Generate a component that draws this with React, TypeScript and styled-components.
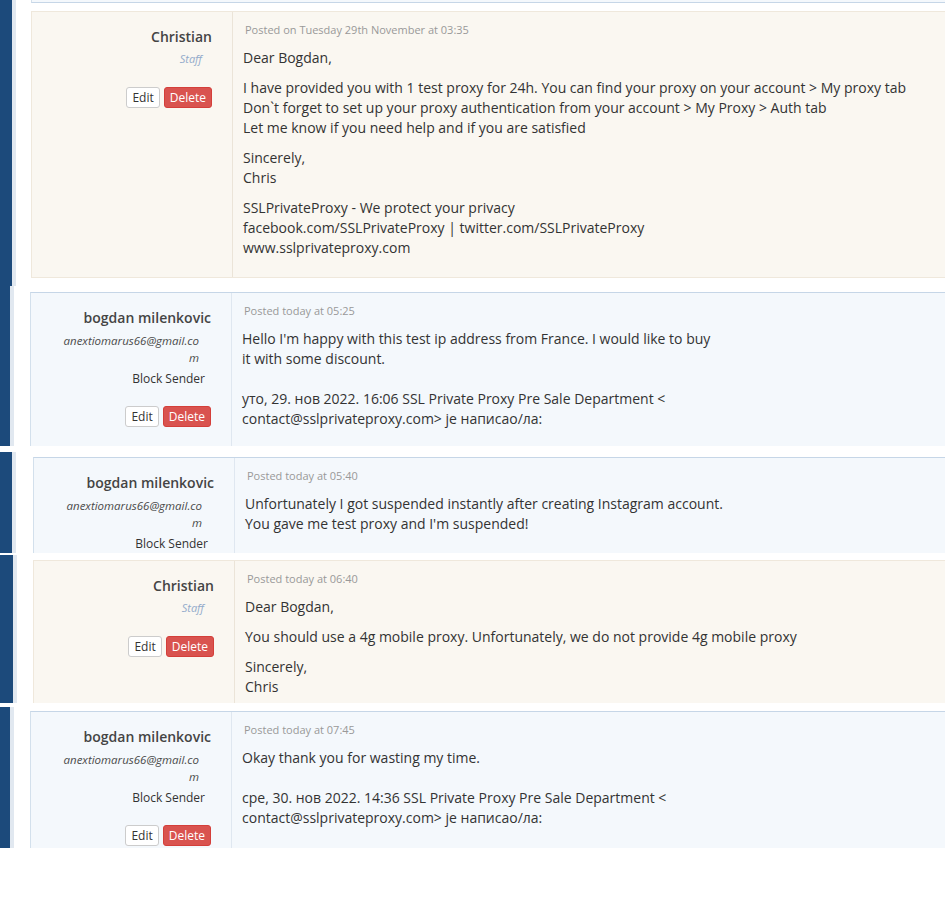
import React from "react";
import styled, { createGlobalStyle, css } from "styled-components";

type Kind = "staff" | "client";

interface Reply {
  kind: Kind;
  name: string;
  email?: string;
  posted: string;
  paragraphs: string[][];
}

interface Slice {
  height: number;
  gap: number;
  bar: number;
  cardLeft: number;
  cardTop: number;
  reply: Reply;
  prevEdge?: boolean;
  noActions?: boolean;
}

const EMAIL = "anextiomarus66@gmail.com";
const QUOTE_TAIL = "contact@sslprivateproxy.com> је написао/ла:";

const slices: Slice[] = [
  {
    height: 286,
    gap: 0,
    bar: 12,
    cardLeft: 31,
    cardTop: 8,
    prevEdge: true,
    reply: {
      kind: "staff",
      name: "Christian",
      posted: "Posted on Tuesday 29th November at 03:35",
      paragraphs: [
        ["Dear Bogdan,"],
        [
          "I have provided you with 1 test proxy for 24h. You can find your proxy on your account > My proxy tab",
          "Don`t forget to set up your proxy authentication from your account > My Proxy > Auth tab",
          "Let me know if you need help and if you are satisfied",
        ],
        ["Sincerely,", "Chris"],
        [
          "SSLPrivateProxy - We protect your privacy",
          "facebook.com/SSLPrivateProxy | twitter.com/SSLPrivateProxy",
          "www.sslprivateproxy.com",
        ],
      ],
    },
  },
  {
    height: 160,
    gap: 0,
    bar: 10,
    cardLeft: 30,
    cardTop: 6,
    reply: {
      kind: "client",
      name: "bogdan milenkovic",
      email: EMAIL,
      posted: "Posted today at 05:25",
      paragraphs: [
        [
          "Hello I'm happy with this test ip address from France. I would like to buy",
          "it with some discount.",
          "",
          "уто, 29. нов 2022. 16:06 SSL Private Proxy Pre Sale Department <",
          QUOTE_TAIL,
        ],
      ],
    },
  },
  {
    height: 101,
    gap: 6,
    bar: 12,
    cardLeft: 33,
    cardTop: 5,
    noActions: true,
    reply: {
      kind: "client",
      name: "bogdan milenkovic",
      email: EMAIL,
      posted: "Posted today at 05:40",
      paragraphs: [
        [
          "Unfortunately I got suspended instantly after creating Instagram account.",
          "You gave me test proxy and I'm suspended!",
        ],
      ],
    },
  },
  {
    height: 148,
    gap: 2,
    bar: 13,
    cardLeft: 33,
    cardTop: 5,
    reply: {
      kind: "staff",
      name: "Christian",
      posted: "Posted today at 06:40",
      paragraphs: [
        ["Dear Bogdan,"],
        ["You should use a 4g mobile proxy. Unfortunately, we do not provide 4g mobile proxy"],
        ["Sincerely,", "Chris"],
      ],
    },
  },
  {
    height: 141,
    gap: 4,
    bar: 10,
    cardLeft: 30,
    cardTop: 4,
    reply: {
      kind: "client",
      name: "bogdan milenkovic",
      email: EMAIL,
      posted: "Posted today at 07:45",
      paragraphs: [
        [
          "Okay thank you for wasting my time.",
          "",
          "сре, 30. нов 2022. 14:36 SSL Private Proxy Pre Sale Department <",
          QUOTE_TAIL,
        ],
      ],
    },
  },
];

const palette = {
  staff: { bg: "#faf7f1", border: "#efe8dc", divider: "#ebe4d8" },
  client: { bg: "#f4f8fc", border: "#d3e0ec", divider: "#dfe7f0" },
};

const GlobalStyle = createGlobalStyle`
  html, body {
    margin: 0;
    padding: 0;
    background: #ffffff;
    overflow: hidden;
  }
  body {
    font-family: "Open Sans", "Noto Sans", sans-serif;
    color: #333333;
  }
`;

const Page = styled.div`
  display: flex;
  flex-direction: column;
  width: 945px;
`;

const Strip = styled.div<{ $height: number; $gap: number }>`
  display: flex;
  height: ${({ $height }) => $height}px;
  margin-top: ${({ $gap }) => $gap}px;
  overflow: hidden;
`;

const SideBar = styled.div<{ $width: number }>`
  flex-shrink: 0;
  width: ${({ $width }) => $width}px;
  background: #1c4a7b;
  border-right: 4px solid #e1e8f0;
`;

const Lane = styled.div<{ $left: number }>`
  flex: 1;
  min-width: 0;
  display: flex;
  flex-direction: column;
  padding-left: ${({ $left }) => $left}px;
`;

const PrevEdge = styled.div`
  height: 2px;
  background: ${palette.client.bg};
  border-left: 1px solid ${palette.client.border};
  border-bottom: 1px solid #c6d6e7;
  margin-bottom: 8px;
`;

const Card = styled.div<{ $kind: Kind; $top: number }>`
  display: flex;
  flex-shrink: 0;
  margin-top: ${({ $top }) => $top}px;
  background: ${({ $kind }) => palette[$kind].bg};
  border: 1px solid ${({ $kind }) => palette[$kind].border};
  border-right: 0;
  ${({ $kind }) =>
    $kind === "client" &&
    css`
      border-top-color: #c6d6e7;
    `}
`;

const Author = styled.div<{ $kind: Kind }>`
  flex-shrink: 0;
  width: 180px;
  padding: 15px 20px 19px 0;
  border-right: 1px solid ${({ $kind }) => palette[$kind].divider};
  display: flex;
  flex-direction: column;
  align-items: flex-end;
  text-align: right;
`;

const Name = styled.div`
  font-size: 14px;
  line-height: 20px;
  font-weight: 600;
  color: #444444;
  margin-bottom: 4px;
`;

const Role = styled.div`
  font-size: 11px;
  line-height: 16px;
  font-style: italic;
  color: #93abcb;
  margin-right: 10px;
  margin-bottom: 3px;
`;

/* the address is wrapped inside a narrow box, as the author column does */
const Email = styled.div`
  width: 142px;
  font-size: 11.5px;
  line-height: 17px;
  font-style: italic;
  color: #4a4a4a;
  word-break: break-all;
  margin-right: 12px;
`;

const BlockLink = styled.div`
  font-size: 12px;
  line-height: 20px;
  color: #333333;
  margin-top: 3px;
  margin-right: 6px;
`;

const Actions = styled.div`
  display: flex;
  gap: 4px;
  margin-top: 17px;
`;

const Button = styled.button<{ $danger?: boolean }>`
  font-family: "Open Sans", "Noto Sans", sans-serif;
  font-size: 12px;
  line-height: 17px;
  padding: 1px 5px;
  border-radius: 3px;
  cursor: pointer;
  border: 1px solid ${({ $danger }) => ($danger ? "#d43f3a" : "#cccccc")};
  background: ${({ $danger }) => ($danger ? "#d9534f" : "#ffffff")};
  color: ${({ $danger }) => ($danger ? "#ffffff" : "#333333")};
`;

const Message = styled.div`
  flex: 1;
  padding: 10px 12px 19px 10px;
  white-space: nowrap;
`;

const Posted = styled.div`
  font-size: 11px;
  line-height: 16px;
  color: #999999;
  margin: 0 0 10px 2px;
`;

const Paragraph = styled.div`
  font-size: 14px;
  line-height: 20px;
  color: #333333;
  margin-bottom: 10px;

  &:last-child {
    margin-bottom: 0;
  }
`;

const Line = styled.div`
  min-height: 20px;
`;

const ReplyCard: React.FC<{ reply: Reply; top: number; actions: boolean }> = ({
  reply,
  top,
  actions,
}) => (
  <Card $kind={reply.kind} $top={top}>
    <Author $kind={reply.kind}>
      <Name>{reply.name}</Name>
      {reply.kind === "staff" ? (
        <Role>Staff</Role>
      ) : (
        <>
          <Email>{reply.email}</Email>
          <BlockLink>Block Sender</BlockLink>
        </>
      )}
      {actions && (
        <Actions>
          <Button>Edit</Button>
          <Button $danger>Delete</Button>
        </Actions>
      )}
    </Author>
    <Message>
      <Posted>{reply.posted}</Posted>
      {reply.paragraphs.map((lines, i) => (
        <Paragraph key={i}>
          {lines.map((line, j) => (
            <Line key={j}>{line}</Line>
          ))}
        </Paragraph>
      ))}
    </Message>
  </Card>
);

export default function App() {
  return (
    <>
      <GlobalStyle />
      <Page>
        {slices.map((s, i) => (
          <Strip key={i} $height={s.height} $gap={s.gap}>
            <SideBar $width={s.bar} />
            <Lane $left={s.cardLeft - s.bar - 4}>
              {s.prevEdge && <PrevEdge />}
              <ReplyCard
                reply={s.reply}
                top={s.prevEdge ? 0 : s.cardTop}
                actions={!s.noActions}
              />
            </Lane>
          </Strip>
        ))}
      </Page>
    </>
  );
}
